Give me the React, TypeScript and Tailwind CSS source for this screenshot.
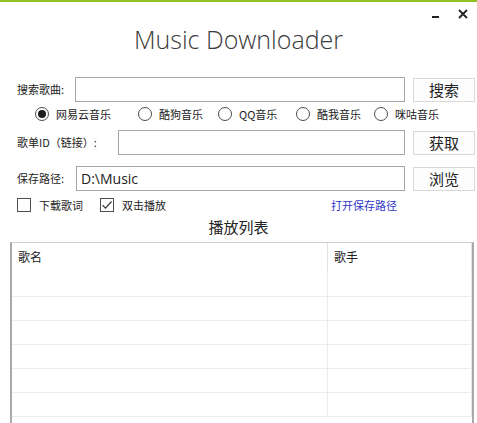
import React from 'react';

// source name and slot width, WinForms-style fixed columns
const sources: [string, string][] = [
  ['网易云音乐', 'w-[103px]'],
  ['酷狗音乐', 'w-[80px]'],
  ['QQ音乐', 'w-[78px]'],
  ['酷我音乐', 'w-[78px]'],
  ['咪咕音乐', 'w-[80px]'],
];

const Radio: React.FC<{ label: string; checked?: boolean; width: string }> = ({ label, checked, width }) => (
  <label className={`flex items-center gap-[7px] ${width}`}>
    <span className="w-[14px] h-[14px] rounded-full border border-[#4d4d4d] bg-white flex items-center justify-center shrink-0">
      {checked && <span className="w-[8px] h-[8px] rounded-full bg-[#1e1e1e]" />}
    </span>
    <span className="text-[11px] text-[#222]">{label}</span>
  </label>
);

const Check: React.FC<{ label: string; checked?: boolean }> = ({ label, checked }) => (
  <label className="flex items-center gap-[8px]">
    <span className="w-[14px] h-[14px] border border-[#4d4d4d] bg-white flex items-center justify-center">
      {checked && (
        <svg width="12" height="12" viewBox="0 0 12 12">
          <path d="M1.5 6.2 L4.5 9.2 L10.5 2.5" fill="none" stroke="#333" strokeWidth="1.2" />
        </svg>
      )}
    </span>
    <span className="text-[11px] text-[#222]">{label}</span>
  </label>
);

const Btn: React.FC<{ text: string }> = ({ text }) => (
  <button className="ml-[8px] w-[62px] h-[24px] border border-[#d9d9d9] bg-[#fdfdfd] text-[15px] text-[#222] leading-none">
    {text}
  </button>
);

export default function App() {
  const rows = Array.from({ length: 6 });
  return (
    <div
      className="w-[477px] h-[423px] bg-white overflow-hidden flex flex-col"
      style={{ fontFamily: '"Noto Sans CJK SC", "Noto Sans", sans-serif' }}
    >
      <div className="h-[2px] bg-[#8dc21f]" />
      <div className="h-[22px] flex justify-end items-center pr-[9px] gap-[19px] text-[#111]">
        <span className="w-[7px] h-[2px] bg-[#222] mt-[8px]" />
        <svg width="10" height="10" viewBox="0 0 10 10" className="mt-[1px]">
          <path d="M1 1 L9 9 M9 1 L1 9" stroke="#222" strokeWidth="1.8" />
        </svg>
      </div>
      <h1
        className="h-[32px] text-center text-[25px] font-light text-[#3a3a3a] leading-[30px]"
        style={{ fontFamily: '"Open Sans", sans-serif' }}
      >
        Music Downloader
      </h1>

      <div className="pl-[17px] flex flex-col">
        <div className="mt-[21px] flex items-center h-[25px]">
          <span className="w-[58px] text-[11px] text-[#222]">搜索歌曲:</span>
          <input className="w-[330px] h-[25px] border border-[#a6a6a6] outline-none" />
          <Btn text="搜索" />
        </div>

        <div className="mt-[4px] h-[16px] pl-[18px] flex items-center">
          {sources.map(([s, w], i) => (
            <Radio key={s} label={s} width={w} checked={i === 0} />
          ))}
        </div>

        <div className="mt-[8px] flex items-center h-[25px]">
          <span className="w-[101px] text-[11px] text-[#222]">歌单ID（链接）:</span>
          <input className="w-[287px] h-[25px] border border-[#a6a6a6] outline-none" />
          <Btn text="获取" />
        </div>

        <div className="mt-[11px] flex items-center h-[25px]">
          <span className="w-[59px] text-[11px] text-[#222]">保存路径:</span>
          <input
            className="w-[329px] h-[25px] border border-[#a6a6a6] outline-none px-[4px] text-[14px] text-[#222]"
            defaultValue="D:\Music"
            style={{ fontFamily: '"Open Sans", sans-serif' }}
          />
          <Btn text="浏览" />
        </div>

        <div className="mt-[7px] h-[14px] flex items-center">
          <Check label="下载歌词" />
          <div className="ml-[17px]">
            <Check label="双击播放" checked />
          </div>
          <a className="ml-[165px] text-[11px] text-[#3036c8]">打开保存路径</a>
        </div>
      </div>

      <div className="h-[30px] flex items-center justify-center text-[15px] text-[#222]">播放列表</div>

      <div className="ml-[10px] w-[464px] flex-1 border-t border-t-[#cfcfcf] border-l-[2px] border-l-[#a9a9a9] border-r-[2px] border-r-[#a9a9a9]">
        <div className="flex h-[30px] border-r border-r-[#e3e3e3]">
          <div className="w-[316px] border-r border-r-[#e3e3e3] pl-[6px] pt-[5px] text-[12px] text-[#222]">歌名</div>
          <div className="flex-1 pl-[6px] pt-[5px] text-[12px] text-[#222]">歌手</div>
        </div>
        {rows.map((_, i) => (
          <div key={i} className="flex h-[24px] border-b border-b-[#ececec] border-r border-r-[#e6e6e6]">
            <div className="w-[316px] border-r border-r-[#ececec]" />
            <div className="flex-1" />
          </div>
        ))}
      </div>
    </div>
  );
}
